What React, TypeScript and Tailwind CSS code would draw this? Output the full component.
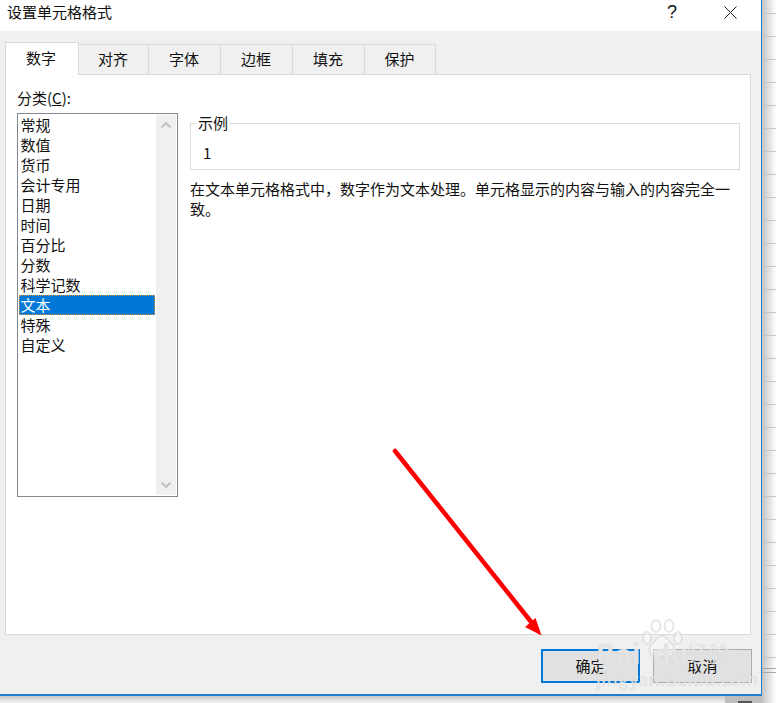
const font = { fontFamily: '"Noto Sans CJK SC", "Liberation Sans", sans-serif' };

const tabs = ["对齐", "字体", "边框", "填充", "保护"];
const tabWidths = ["w-[70px]", "w-[72px]", "w-[72px]", "w-[72px]", "w-[71px]"];
const categories = ["常规", "数值", "货币", "会计专用", "日期", "时间", "百分比", "分数", "科学记数", "文本", "特殊", "自定义"];
const sheetRows = Array.from({ length: 27 });

function Watermark() {
  return (
    <div className="absolute left-[596px] top-[617px] w-[140px] h-[70px] text-white/50 pointer-events-none [text-shadow:0_0_1px_#c8c8c8]">
      <svg className="absolute left-[45px] top-[2px] w-[42px] h-[42px] opacity-70" viewBox="0 0 42 42" fill="none" stroke="#dcdcdc" strokeWidth="2">
        <ellipse cx="6" cy="19" rx="4" ry="6" fill="#fff" fillOpacity="0.6" />
        <ellipse cx="15" cy="7" rx="4.5" ry="6" fill="#fff" fillOpacity="0.6" />
        <ellipse cx="28" cy="7" rx="4.5" ry="6" fill="#fff" fillOpacity="0.6" />
        <ellipse cx="37" cy="19" rx="4" ry="6" fill="#fff" fillOpacity="0.6" />
        <path d="M21 17c-5 0-7 5-10 8-4 4-3 13 4 13 2 0 4-1 6-1s4 1 6 1c7 0 8-9 4-13-3-3-5-8-10-8z" fill="#fff" fillOpacity="0.6" />
      </svg>
      <span className="absolute left-0 top-[21px] text-[27px] leading-[30px] font-bold tracking-[1px]">Bai</span>
      <span className="absolute left-[57px] top-[21px] text-[27px] leading-[30px] font-bold">du</span>
      <span className="absolute left-[90px] top-[21px] text-[22px] leading-[28px]">经验</span>
      <span className="absolute left-0 top-[50px] text-[18px] leading-[22px] tracking-[0.4px] whitespace-nowrap">jingyan.baidu.com</span>
    </div>
  );
}

function Arrow() {
  return (
    <svg className="absolute left-0 top-0 w-[776px] h-[703px] pointer-events-none" viewBox="0 0 776 703">
      <line x1="395" y1="451" x2="532" y2="623" stroke="#ff0000" strokeWidth="4.5" strokeLinecap="round" />
      <polygon points="541.5,635.5 525,627 535.5,618" fill="#ff0000" />
    </svg>
  );
}

export default function App() {
  return (
    <div className="relative flex w-[776px] h-[703px] overflow-hidden bg-white text-[15px] text-[#111]" style={font}>
      {/* Dialog */}
      <div className="flex flex-col w-[762px] h-[696px] shrink-0 border-r border-b-2 border-[#1f80d0] bg-[#f0f0f0]">
        <div className="flex items-center h-[31px] bg-white pl-[7px] pb-[7px]">
          <span className="leading-[24px]">设置单元格格式</span>
          <span className="ml-auto mr-[47px] text-[18px] leading-[24px]" style={{ fontFamily: '"Liberation Sans", sans-serif' }}>?</span>
          <svg className="w-[13px] h-[13px] mr-[24px]" viewBox="0 0 13 13" stroke="#222" strokeWidth="1" fill="none">
            <path d="M0.5 0.5l12 12M12.5 0.5l-12 12" />
          </svg>
        </div>

        {/* Tab strip */}
        <div className="flex items-end h-[43px] pl-[5px] relative z-10">
          <div className="flex items-center justify-center w-[74px] h-[33px] -mb-px pb-[2px] pr-[2px] bg-white border-t border-x border-[#d9d9d9]">数字</div>
          {tabs.map((t, i) => (
            <div key={t} className={`flex items-center justify-center h-[30px] pr-[1px] border-t border-r border-[#d9d9d9] ${tabWidths[i]}`}>
              {t}
            </div>
          ))}
        </div>

        {/* Panel */}
        <div className="flex flex-col ml-[5px] w-[746px] h-[561px] border border-[#d9d9d9] bg-white pl-[11px] pt-[12px]">
          <div className="leading-[22px] h-[24px]">
            分类(<span className="underline">C</span>):
          </div>
          <div className="flex gap-[12px] mt-[2px]">
            <div className="flex w-[161px] h-[384px] border border-[#828790] p-px">
              <div className="flex flex-col w-[136px]">
                {categories.map((c) => (
                  <div
                    key={c}
                    className={
                      c === "文本"
                        ? "h-[20px] pl-[2px] -indent-[0.5px] leading-[20px] bg-[#0078d7] text-white outline-1 -outline-offset-1 outline-dotted outline-[#e09030]"
                        : "h-[20px] pl-[2px] -indent-[0.5px] leading-[20px]"
                    }
                  >
                    {c}
                  </div>
                ))}
              </div>
              <div className="flex flex-col justify-between items-center w-[20px] ml-px bg-[#f0f0f0] py-[7px]">
                <svg className="w-[10px] h-[6px]" viewBox="0 0 10 6" fill="none" stroke="#c2c2c2" strokeWidth="2">
                  <path d="M0.5 5.5L5 1l4.5 4.5" />
                </svg>
                <svg className="w-[10px] h-[6px]" viewBox="0 0 10 6" fill="none" stroke="#c2c2c2" strokeWidth="2">
                  <path d="M0.5 0.5L5 5l4.5-4.5" />
                </svg>
              </div>
            </div>

            <div className="flex flex-col w-[550px]">
              <div className="relative h-[47px] mt-[10px] border border-[#dcdcdc] pl-[12px] pt-[18px] leading-[22px]">
                <span className="absolute left-[5px] -top-[9px] bg-white px-[2px] leading-[16px]">示例</span>
                1
              </div>
              <p className="mt-[9px] leading-[20px] w-[548px]">在文本单元格格式中，数字作为文本处理。单元格显示的内容与输入的内容完全一致。</p>
            </div>
          </div>
        </div>

        {/* Buttons */}
        <div className="flex justify-end gap-[13px] pr-[9px] pt-[14px]">
          <div className="flex items-center justify-center w-[99px] h-[34px] border-2 border-[#0078d7] bg-[#e1e1e1]">确定</div>
          <div className="flex items-center justify-center w-[99px] h-[34px] border border-[#adadad] bg-[#e1e1e1]">取消</div>
        </div>
      </div>

      {/* Sheet behind the dialog */}
      <div className="flex flex-col flex-1 h-[703px] bg-gradient-to-r from-[#c4c4c4] to-white">
        <div className="h-[14px] shrink-0 border-b border-[#c6c6c6]" />
        {sheetRows.map((_, i) => (
          <div key={i} className="h-[23px] shrink-0 border-b border-[#c6c6c6]" />
        ))}
        <div className="h-[23px] shrink-0 border-b border-[#c6c6c6]" />
        <div className="h-[11px] shrink-0 border-b border-[#a8a8a8]" />
        <div className="h-[4px] shrink-0 border-b border-[#a8a8a8]" />
      </div>

      {/* Dialog shadow along the bottom */}
      <div className="absolute left-0 top-[696px] w-[762px] h-[7px] bg-gradient-to-b from-[#c8c8c8] to-[#f2f2f2]" />
      <div className="absolute left-[725px] top-[696px] w-[37px] h-[7px] bg-[#bdbdbd]" />
      <div className="absolute left-[738px] top-[701px] w-[14px] h-[2px] bg-[#555]" />

      <Arrow />
      <Watermark />
    </div>
  );
}
